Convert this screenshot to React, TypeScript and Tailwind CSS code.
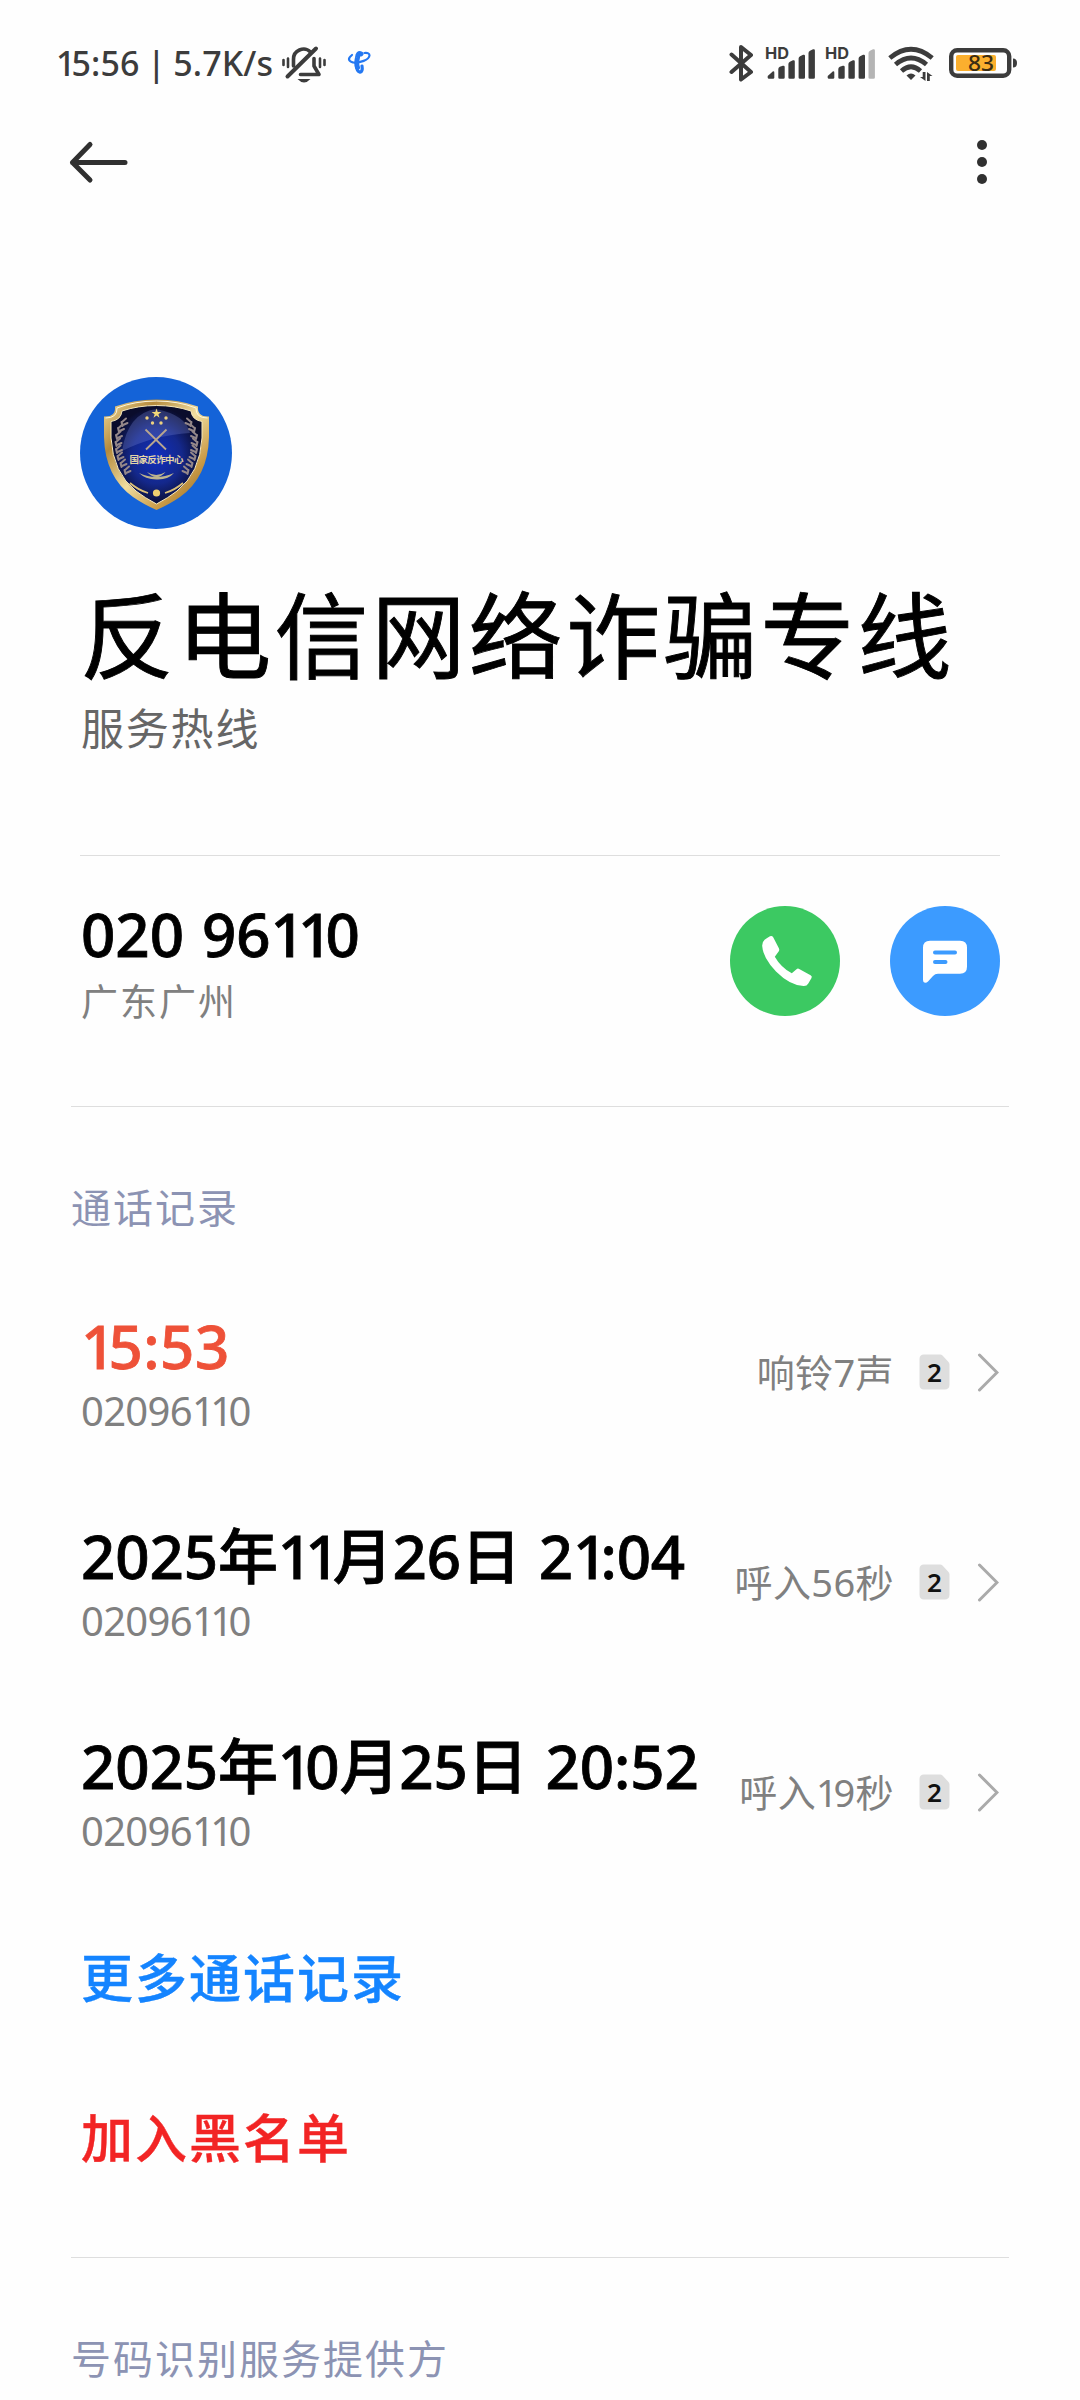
import { clsx } from 'clsx';

type CallRecord = {
  time: string;
  number: string;
  status: string;
  sim: number;
  missed?: boolean;
};

const CALLS: CallRecord[] = [
  { time: '15:53', number: '02096110', status: '响铃7声', sim: 2, missed: true },
  { time: '2025年11月26日 21:04', number: '02096110', status: '呼入56秒', sim: 2 },
  { time: '2025年10月25日 20:52', number: '02096110', status: '呼入19秒', sim: 2 },
];

// the digit 1 is set narrower than the other digits
function Num({ children }: { children: string }) {
  return children.split(/(1+)/).map((part, i) =>
    part.startsWith('1') ? (
      <span key={i} className="tracking-[-0.115em]">
        {part}
      </span>
    ) : (
      part
    )
  );
}

function MutedBell() {
  return (
    <svg width="46" height="40" viewBox="0 0 46 40" fill="none" stroke="#3c3c3c" strokeLinecap="round">
      <path d="M2.500 15v5M7 13.500v8.500M39 13.500v8.500M43.500 15v5" strokeWidth="2.600" />
      <path d="M12.500 21v-6.500a10 10 0 0 1 17-7.500" strokeWidth="3.600" />
      <path d="M33 13.500V21l5 8.500H19.500" strokeWidth="3.600" strokeLinejoin="round" />
      <path d="M35 3.500L6.500 31.500" strokeWidth="4" />
      <path d="M16.500 34h13q-6.500 7-13 0z" fill="#3c3c3c" stroke="none" />
    </svg>
  );
}

function CarrierLogo() {
  return (
    <svg width="24" height="24" viewBox="0 0 24 24" fill="none" stroke="#2478f2" strokeLinecap="round">
      <path d="M5 4Q-1.500 9 6 11.500C13 12 22 9 22.500 4.500Q22.500 1.500 17.500 2" strokeWidth="2.200" />
      <path d="M14 3Q11 1.500 10.500 6.500Q9 13 10.500 16.500" strokeWidth="5" />
      <path d="M9.500 14Q9.500 20.500 13 21.200Q16 20.500 15 15" strokeWidth="3.200" />
    </svg>
  );
}

function Bluetooth() {
  return (
    <svg width="26" height="40" viewBox="0 0 26 40" fill="none" stroke="#3c3c3c" strokeWidth="4" strokeLinecap="round" strokeLinejoin="round">
      <path d="M2.500 9.500L22 27 12 34.500V2l10 8L2.500 27" />
    </svg>
  );
}

function Signal({ weak = false }: { weak?: boolean }) {
  return (
    <svg className="overflow-visible" width="52" height="40" viewBox="0 0 52 40" fill="#3c3c3c">
      <text x="0" y="14.200" fontSize="16.500" fontWeight="700" fontFamily="Inter, sans-serif" textLength="24" lengthAdjust="spacingAndGlyphs">
        HD
      </text>
      <path d="M2.700 31l5-4.500q1.600-.8 1.600 1V32.500q0 1.300-1.300 1.300H4q-1.300 0-1.300-1.300z" />
      <path d="M13.300 24q0-1.500 1.500-2.200l3-1q1.900-.4 1.900 1.200V32.500q0 1.300-1.300 1.300h-3.800q-1.300 0-1.300-1.300z" />
      <path d="M23.400 19q0-1.500 1.500-2.200l3-1.500q1.900-.6 1.900 1.200V32.500q0 1.300-1.300 1.300h-3.800q-1.300 0-1.300-1.300z" />
      <path d="M33.600 13.500q0-1.500 1.500-2.200l3-1.500q1.900-.6 1.900 1.200V32.500q0 1.300-1.300 1.300h-3.800q-1.300 0-1.300-1.300z" />
      <path
        fill={weak ? '#b4b4b4' : '#3c3c3c'}
        d="M43.500 8q0-1.500 1.500-2.200l3-1.500q1.900-.6 1.900 1.200V32.500q0 1.300-1.300 1.300h-3.800q-1.300 0-1.300-1.300z"
      />
    </svg>
  );
}

function Wifi() {
  return (
    <svg width="48" height="40" viewBox="0 0 48 40" fill="none" stroke="#3c3c3c" strokeWidth="4.800">
      <path d="M1.800 13Q23 -4.500 44.200 13" />
      <path d="M7.500 19.500Q23 6.500 38.500 19.500" />
      <path d="M13.500 26Q23 17.500 32.500 26" />
      <path d="M23 35l-4.500-4.500q4.500-4 9 0z" fill="#3c3c3c" stroke="none" />
      <path d="M37.500 27v9l-5.500-4h2.700v-5zM39 36v-9l5.500 4h-2.700v5z" fill="#3c3c3c" stroke="none" />
    </svg>
  );
}

function Battery() {
  return (
    <svg width="70" height="40" viewBox="0 0 70 40">
      <rect x="2.200" y="5.200" width="58" height="25.500" rx="6" fill="none" stroke="#3c3c3c" strokeWidth="4.400" />
      <rect x="7" y="10" width="40" height="16" rx="2" fill="#fbaf2e" />
      <path d="M64 13.500q4 0 4 4.500t-4 4.500z" fill="#3c3c3c" />
      <text x="19" y="26.200" fontSize="22" fontWeight="500" fontFamily="'Noto Sans', sans-serif" fill="#3a2c14" textLength="26" lengthAdjust="spacingAndGlyphs">
        83
      </text>
    </svg>
  );
}

const LEAVES = [
  [42, 45], [38.500, 51], [36.500, 58], [36, 65], [36.500, 72], [38, 79], [41, 86], [45, 93],
];

function Avatar() {
  return (
    <svg className="size-[152px]" viewBox="0 0 152 152">
      <defs>
        <linearGradient id="gold" x1="0" y1="0" x2="1" y2="1">
          <stop offset="0" stopColor="#f3dfa0" />
          <stop offset=".25" stopColor="#b58a3c" />
          <stop offset=".5" stopColor="#f0dda0" />
          <stop offset=".75" stopColor="#c99a45" />
          <stop offset="1" stopColor="#7a5520" />
        </linearGradient>
        <radialGradient id="face" cx=".5" cy=".52" r=".5">
          <stop offset="0" stopColor="#0f2fc0" />
          <stop offset=".55" stopColor="#14288c" />
          <stop offset="1" stopColor="#0a0c2c" />
        </radialGradient>
      </defs>
      <circle cx="76" cy="76" r="76" fill="#1463d8" />
      <path
        d="M24 39.500Q36 40 35 29.500Q54 22.500 76.500 22.500T118 29.500Q117 40 129 39.500V60Q128 100 100 120Q90 127 76.500 133Q63 127 53 120Q25 100 24 60z"
        fill="url(#gold)"
      />
      <path
        d="M25.500 41Q37.500 41 37 31Q55 24 76.500 24T116 31Q115.500 41 127.500 41"
        fill="none"
        stroke="#fdf6dc"
        strokeWidth="1"
      />
      <path
        d="M31 44.500Q41 43 42 34Q58 28.500 76.500 28.500T111 34Q112 43 122 44.500V61Q120 96 97 114Q88 121 76.500 127Q65 121 56 114Q33 96 31 61z"
        fill="url(#face)"
        stroke="#f7e9bd"
        strokeWidth="1"
      />
      <path d="M42 74Q74 58 110 56Q106 38 76 32Q48 36 42 74z" fill="#8190dd" opacity=".28" />
      <path
        d="M76.500 31.500l1.200 3.500h3.700l-3 2.200 1.100 3.500-3-2.100-3 2.100 1.100-3.500-3-2.200h3.700z"
        fill="#f2d878"
      />
      {[[67, 41], [86, 41], [72.500, 46], [81, 46]].map(([x, y]) => (
        <circle key={x} cx={x} cy={y} r="1.700" fill="#ecd080" />
      ))}
      <path d="M65.500 52.500l20.500 20M86.500 52.500l-20.500 20" stroke="#b9a68e" strokeWidth="1.800" />
      {LEAVES.map(([x, y]) => (
        <g key={y} stroke="#94878a" strokeWidth="2" strokeLinecap="round">
          <path d={`M${x} ${y}l4 -3.500M${x + 1} ${y + 3}l4.500 -2M${x - 0.500} ${y}l1 4`} />
          <path d={`M${153 - x} ${y}l-4 -3.500M${152 - x} ${y + 3}l-4.500 -2M${153.500 - x} ${y}l-1 4`} />
        </g>
      ))}
      <text
        x="49.500"
        y="86"
        fontSize="9.500"
        fontWeight="700"
        fontFamily="'Noto Sans CJK SC', sans-serif"
        fill="#e4d6a8"
        textLength="54"
      >
        国家反诈中心
      </text>
      <path d="M59 96q17 8 35 0q-6 7-17.500 6.500T59 96zM67 95q9 6 18.500 0q-4 5-9 5t-9.500-5z" fill="#bdb48e" />
      <path d="M50 106q8 7 18 10M103 106q-8 7-18 10" fill="none" stroke="#dcc078" strokeWidth="1.800" />
      <circle cx="76.500" cy="116" r="3.600" fill="#efd070" />
    </svg>
  );
}

function PhoneIcon() {
  return (
    <svg className="size-full" viewBox="0 0 110 110" fill="#fff">
      <path d="M40 30.300Q42 29.400 43.200 31.200L49 42.500Q49.700 44 48.800 45.200L44.800 50.700Q51 61.500 61.800 67.300L66.500 63.200Q67.700 62.200 69.200 62.900L80.600 69.200Q82.500 70.300 81.500 72L78.300 77.500Q76.800 80.200 73.500 80Q60 79.500 46 65.500Q33 52 32.200 40Q32 36 34.600 33.800Q37 31.800 40 30.300z" />
    </svg>
  );
}

function MessageIcon() {
  return (
    <svg className="size-full" viewBox="0 0 110 110">
      <path
        d="M40 34.700H70Q77 34.700 77 41.700V60.700Q77 67.700 70 67.700H48Q45 67.700 43 70L38 75.500Q36.500 76.900 35 76.700Q33 76.500 33 74V41.700Q33 34.700 40 34.700z"
        fill="#fff"
      />
      <path d="M45 46.400H65M45 56.100H55.500" stroke="#3c9bff" strokeWidth="4" strokeLinecap="round" />
    </svg>
  );
}

function SimBadge({ sim }: { sim: number }) {
  return (
    <div className="relative flex h-9 w-[31px] items-center justify-center">
      <svg className="absolute inset-0 size-full" viewBox="0 0 31 36" fill="#dedede">
        <path d="M5 .5H21Q22.500 .5 23.500 1.500L29.500 8Q30.500 9 30.500 10.500V30.500Q30.500 35.500 25.500 35.500H5Q.5 35.500 .5 30.500V5Q.5 .5 5 .5z" />
      </svg>
      <span className="relative text-[26px] leading-9 font-semibold text-[#111]">{sim}</span>
    </div>
  );
}

function CallRow({ call }: { call: CallRecord }) {
  return (
    <div className="flex h-[210px] items-center justify-between pr-[81px] pl-[81px]">
      <div className="flex flex-col pt-[10px]">
        <span
          className={clsx(
            'text-[60px] leading-[68px] font-medium [word-spacing:0.04em] whitespace-pre [-webkit-text-stroke-width:0.8px]',
            call.missed ? 'tracking-[0.5px] text-[#ee5138]' : 'tracking-[-0.1px] text-black'
          )}
        >
          <Num>{call.time}</Num>
        </span>
        <span className="text-[40px] leading-[62px] tracking-[-0.7px] text-[#808080]">
          <Num>{call.number}</Num>
        </span>
      </div>
      <div className="flex items-center">
        <span className="text-[38px] leading-[50px] tracking-[0.4px] text-[#808080]">
          <Num>{call.status}</Num>
        </span>
        <div className="ml-[25px]">
          <SimBadge sim={call.sim} />
        </div>
        <svg className="ml-[27px] h-10 w-[22px]" viewBox="0 0 22 40" fill="none" stroke="#aaa" strokeWidth="3" strokeLinecap="round">
          <path d="M2.500 3L20 20.500 2.500 38" />
        </svg>
      </div>
    </div>
  );
}

export default function App() {
  return (
    <div className="flex h-[2400px] w-[1080px] flex-col overflow-hidden bg-[#fefefe] font-['Noto_Sans','Noto_Sans_CJK_SC',sans-serif]">
      {/* status bar */}
      <div className="flex h-[126px] items-center justify-between pt-1 pr-[61px] pl-14">
        <div className="flex items-center">
          <span className="mb-1 w-[225px] text-[34px] leading-10 font-medium tracking-[0.1px] [word-spacing:-1.5px] whitespace-nowrap text-[#3c3c3c]">
            <Num>15:56 | 5.7K/s</Num>
          </span>
          <MutedBell />
          <div className="mb-1 ml-5">
            <CarrierLogo />
          </div>
        </div>
        <div className="flex items-center">
          <Bluetooth />
          <div className="ml-[10px]">
            <Signal />
          </div>
          <div className="ml-2">
            <Signal weak />
          </div>
          <div className="ml-[11px]">
            <Wifi />
          </div>
          <div className="ml-[13px]">
            <Battery />
          </div>
        </div>
      </div>

      {/* toolbar */}
      <div className="flex h-[72px] items-center justify-between pr-[93px] pl-[68px]">
        <svg width="62" height="44" viewBox="0 0 62 44" fill="none" stroke="#303030" strokeWidth="5" strokeLinecap="round" strokeLinejoin="round">
          <path d="M22 4.500L4.500 22.500 22 40M4.500 22.500H57" />
        </svg>
        <div className="flex flex-col gap-[7px]">
          <i className="size-[10px] rounded-full bg-[#303030]" />
          <i className="size-[10px] rounded-full bg-[#303030]" />
          <i className="size-[10px] rounded-full bg-[#303030]" />
        </div>
      </div>

      {/* profile */}
      <div className="mx-20 flex h-[658px] flex-col border-b border-[#dedede] pt-[179px]">
        <Avatar />
        <h1 className="mt-[47px] text-[94px] leading-[120px] font-normal tracking-[3.2px] whitespace-nowrap text-black [-webkit-text-stroke-width:0.9px]">
          反电信网络诈骗专线
        </h1>
        <p className="mt-[3px] pl-px text-[43px] leading-[60px] tracking-[1.8px] text-[#666]">服务热线</p>
      </div>

      <div className="flex h-[250px] justify-between px-20 pt-[50px]">
        <div className="flex flex-col pl-px">
          <span className="text-[60px] leading-[56px] font-medium [word-spacing:0.04em] text-black [-webkit-text-stroke-width:0.8px]">
            <Num>020 96110</Num>
          </span>
          <span className="mt-[15px] text-[37px] leading-[50px] tracking-[2px] text-[#808080]">广东广州</span>
        </div>
        <div className="flex gap-[50px]">
          <button className="size-[110px] rounded-full bg-[#3cc962]">
            <PhoneIcon />
          </button>
          <button className="size-[110px] rounded-full bg-[#3c9bff]">
            <MessageIcon />
          </button>
        </div>
      </div>

      {/* call history */}
      <div className="mx-[71px] h-[161px] border-t border-[#dedede] pt-[71px]">
        <h2 className="text-[40px] leading-[60px] tracking-[2px] text-[#8c93b3]">通话记录</h2>
      </div>
      {CALLS.map((call) => (
        <CallRow key={call.time} call={call} />
      ))}
      <div className="flex h-[360px] flex-col pt-[51px] pl-[81px] text-[52px] leading-[60px] font-medium tracking-[2px] [-webkit-text-stroke-width:0.4px]">
        <span className="text-[#1484ff]">更多通话记录</span>
        <span className="mt-[100px] text-[#f22424]">加入黑名单</span>
      </div>

      <div className="mx-[71px] border-t border-[#dedede] pt-[71px]">
        <h2 className="text-[40px] leading-[60px] tracking-[2px] text-[#8c93b3]">号码识别服务提供方</h2>
      </div>
    </div>
  );
}
